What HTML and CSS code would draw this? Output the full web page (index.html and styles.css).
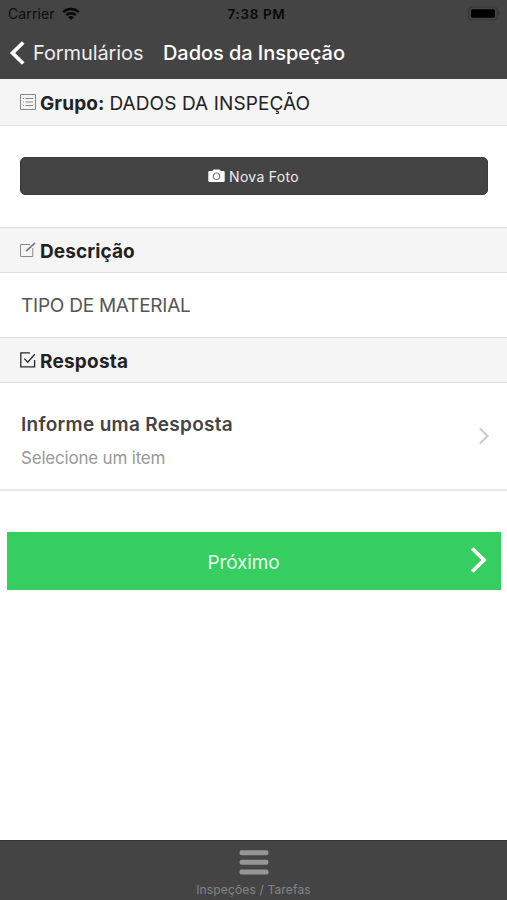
FILE: index.html
```html
<!DOCTYPE html>
<html lang="pt-BR">
<head>
<meta charset="utf-8">
<title>Dados da Inspeção</title>
<link rel="stylesheet" href="styles.css">
</head>
<body>
<div class="app">
  <header class="top">
    <div class="status">
      <div class="carrier"><span>Carrier</span>
        <svg width="18" height="14" viewBox="0 0 18 14" fill="none" stroke="#080808" stroke-width="2.5"><path d="M1.2 5.2a11.4 11.4 0 0 1 15.6 0M4.2 8.2a7.1 7.1 0 0 1 9.6 0"/><path d="M9 13.1L6.2 10.3a4.2 4.2 0 0 1 5.6 0z" fill="#080808" stroke="none"/></svg>
      </div>
      <div class="clock">7:38 PM</div>
      <svg class="battery" width="33" height="16" viewBox="0 0 33 16"><rect x=".75" y="1" width="28.5" height="13" rx="3.5" fill="none" stroke="#363636" stroke-width="1.2"/><rect x="3" y="3.2" width="24" height="8.6" rx="1.5" fill="#000"/><path d="M30.5 5.5q2.4 2 0 4z" fill="#333"/></svg>
    </div>
    <nav class="bar">
      <svg width="18" height="24" viewBox="0 0 18 24" fill="none" stroke="#fff" stroke-width="3.8"><path d="M15.2 1.5L4.5 12l10.7 10.5"/></svg>
      <span class="back">Formulários</span>
      <h1>Dados da Inspeção</h1>
    </nav>
  </header>
  <main>
    <h2 class="divider group">
      <svg width="16" height="16" viewBox="0 0 16 16" fill="none" stroke="#888"><path d="M.5 .5h15v15H.5z"/><path d="M3 4.5h1M5.5 4.5H13M3 8h1M5.5 8H13M3 11.5h1M5.5 11.5H13"/></svg>
      <b>Grupo:</b><span>DADOS DA INSPEÇÃO</span>
    </h2>
    <section class="photo">
      <button>
        <svg width="17" height="14" viewBox="0 0 17 14"><path d="M1.5 2H4.2L5.5 .4h6L12.8 2h2.7q1.2 0 1.2 1.2v8.6q0 1.2-1.2 1.2h-14Q.3 13 .3 11.8V3.2Q.3 2 1.5 2z" fill="#fff"/><circle cx="8.5" cy="7.2" r="3.2" fill="none" stroke="#777" stroke-width="1.2"/></svg>
        <span>Nova Foto</span>
      </button>
    </section>
    <h2 class="divider desc">
      <svg width="16" height="16" viewBox="0 0 16 16" fill="none" stroke="#888"><path d="M10 2.5H.5v12h12.3V6"/><path d="M6.3 9.2L15 .8" stroke="#777" stroke-width="1.6"/></svg>
      <b>Descrição</b>
    </h2>
    <p class="material">TIPO DE MATERIAL</p>
    <h2 class="divider answer">
      <svg width="16" height="16" viewBox="0 0 16 16" fill="none" stroke="#292929" stroke-width="1.3"><path d="M10 .8H.8v14h13.8V8"/><path d="M4.3 6.6l3.4 3.6L14.8 2.2"/></svg>
      <b>Resposta</b>
    </h2>
    <section class="choice">
      <div><h3>Informe uma Resposta</h3><p>Selecione um item</p></div>
      <svg width="12" height="18" viewBox="0 0 12 18" fill="none" stroke="#c8c8c8" stroke-width="2"><path d="M2 1.5L9.5 9 2 16.5"/></svg>
    </section>
    <div class="next">
      <span>Próximo</span>
      <svg width="18" height="28" viewBox="0 0 18 28" fill="none" stroke="#fff" stroke-width="3.8" stroke-linecap="butt"><path d="M2.2 2.5L13.9 14 2.2 25.5"/></svg>
    </div>
  </main>
  <footer>
    <svg width="30" height="26" viewBox="0 0 30 26" fill="#969696"><rect x=".5" y=".2" width="29" height="5" rx="2.2"/><rect x=".5" y="9.8" width="29" height="5" rx="2.2"/><rect x=".5" y="19.6" width="29" height="5" rx="2.2"/></svg>
    <span>Inspeções / Tarefas</span>
  </footer>
</div>
</body>
</html>
```
FILE: styles.css
```css
* { box-sizing: border-box; }
body { margin: 0; background: #fff; font-family: Inter, "Liberation Sans", sans-serif; }
h1, h2, h3, p { margin: 0; font-weight: 400; }
svg { display: block; flex: none; }
span, b, h1, h3, p { white-space: nowrap; }
.app { width: 507px; height: 900px; display: flex; flex-direction: column; overflow: hidden; }
main { flex: 1; }

.top { height: 79px; background: #444; }
.status { height: 27px; display: grid; grid-template-columns: 1fr auto 1fr; align-items: center; padding: 0 6px 0 8px; color: #0c0c0c; font-size: 14px; }
.carrier { display: flex; align-items: center; gap: 7px; }
.carrier span { letter-spacing: .1px; }
.clock { padding-left: 4px; font-weight: 600; font-size: 13.5px; letter-spacing: .65px; color: #080808; }
.clock { padding-right: 0; }
.battery { justify-self: end; }
.bar { height: 51px; display: flex; align-items: center; padding-left: 8px; color: #fff; }
.back { margin-left: 7px; width: 130px; font-size: 20px; letter-spacing: -.1px; color: #eee; }
.bar h1 { font-size: 20px; font-weight: 500; letter-spacing: -.06px; }

.divider { height: 46px; display: flex; align-items: center; padding-left: 20px; background: #f5f5f5; border: solid #dedede; border-width: 1px 0; font-size: 19px; color: #222; }
.group { height: 47px; border-top: 0; border-bottom: 1px solid #e2e2e2; }
.divider b { margin-left: 4px; padding-top: 2px; font-weight: 700; letter-spacing: .1px; }
.divider span { margin-left: 5px; padding-top: 2px; letter-spacing: .1px; }
.answer b { letter-spacing: .22px; }

.photo { height: 101px; padding: 31px 19px 0 20px; }
.photo button { width: 100%; height: 38px; display: flex; align-items: center; justify-content: center; gap: 4px; padding: 0 7px 0 6px; border: 1px solid #3c3c3c; border-radius: 5px; background: #444; color: #eee; font: 400 14px Inter, sans-serif; letter-spacing: .3px; }
.material { height: 64px; line-height: 66px; padding-left: 21px; font-size: 19px; letter-spacing: -.24px; color: #555; }

.choice { height: 108px; display: flex; align-items: center; justify-content: space-between; padding: 0 17px 0 21px; border-bottom: 2px solid #e6e6e6; }
.choice div { padding-top: 9px; }
.choice h3 { font-size: 19px; line-height: 24px; font-weight: 600; letter-spacing: .3px; color: #444; }
.choice p { margin-top: 10px; font-size: 17px; line-height: 22px; letter-spacing: -.2px; color: #999; }
.next { height: 57.5px; margin: 41px 6px 0 7px; padding: 0 13px 0 10px; display: flex; align-items: center; background: #36ce60; color: #eaffef; font-size: 19px; letter-spacing: -.15px; }
.next span { flex: 1; padding: 3px 0 0; text-align: center; }
.next svg { margin-bottom: 2px; }

footer { height: 60px; padding-top: 9px; display: flex; flex-direction: column; align-items: center; background: #444; border-top: 1px solid #333; color: #858585; }
footer span { margin-top: 6px; font-size: 12px; line-height: 16px; letter-spacing: .15px; }
```
